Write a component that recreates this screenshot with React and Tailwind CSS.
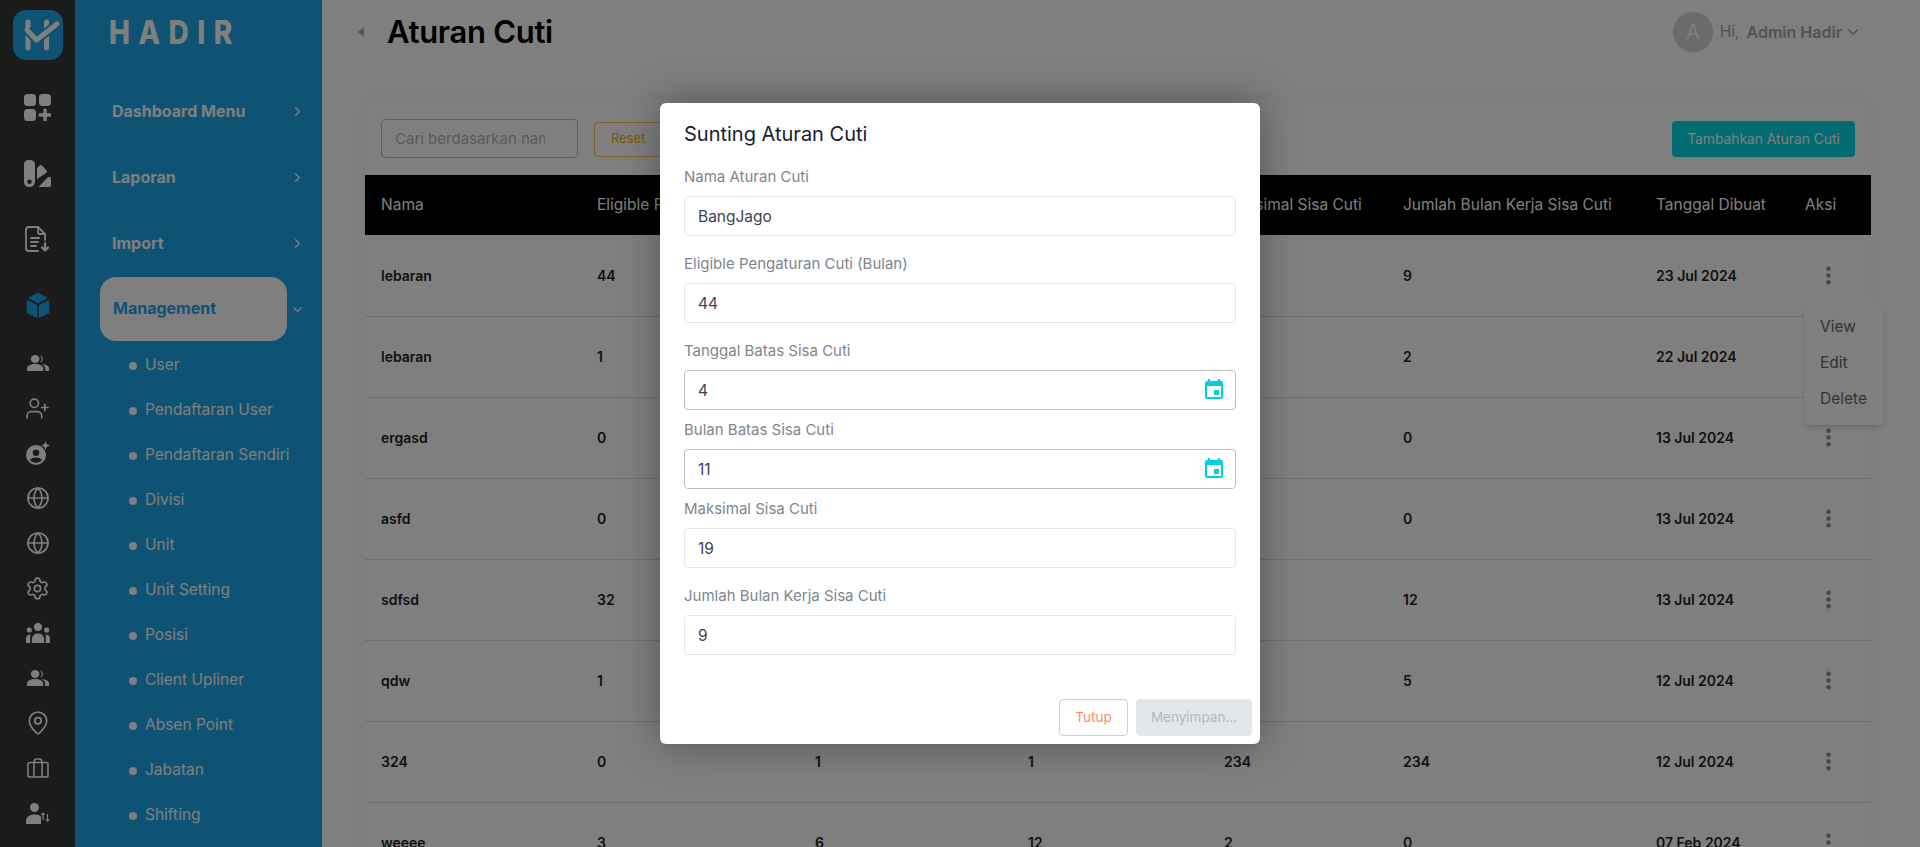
import { ChevronRight, ChevronDown, Globe, Settings, MapPin, UserPlus } from "lucide-react";
import { MdEvent } from "react-icons/md";

const font = { fontFamily: "Inter, sans-serif" };

const LogoMark = () => (
    <svg viewBox="0 0 50 50" className="h-[50px] w-[50px]">
        <rect width="50" height="50" rx="13" fill="#1ca4e8" />
        <path d="M15 12V38M33.500 12V38" stroke="#fff" strokeWidth="5" strokeLinecap="round" />
        <path d="M14 20L23.500 30L44 14" fill="none" stroke="#1ca4e8" strokeWidth="9" />
        <path d="M14 20L23.500 30L44 14" fill="none" stroke="#fff" strokeWidth="5" strokeLinecap="round" strokeLinejoin="round" />
    </svg>
)

const AppsPlus = () => (
    <svg viewBox="0 0 27 27" className="h-[27px] w-[27px]" fill="#fff">
        <rect width="12" height="12" rx="3.500" />
        <rect x="15" width="12" height="12" rx="3.500" />
        <rect y="15" width="12" height="12" rx="3.500" />
        <path d="M21 16V26M16 21H26" stroke="#fff" strokeWidth="3.500" strokeLinecap="round" />
    </svg>
)

const Swatch = () => (
    <svg viewBox="0 0 27 27" className="h-[27px] w-[27px]" fill="#fff">
        <path fillRule="evenodd" d="M5.500 0C8.500 0 11 1.500 11 4V22C11 25 8.500 27 5.500 27S0 25 0 22V4C0 1.500 2.500 0 5.500 0ZM5.500 19.500A2.300 2.300 0 1 0 5.500 24.100A2.300 2.300 0 1 0 5.500 19.500Z" />
        <path d="M13 19V8L15.500 5.500Q16.800 4.500 18 5.500L22.500 10.500Q23.500 11.500 22.500 12.800Z" />
        <path d="M14.500 27L24 17H25.500Q27 17 27 19V25Q27 27 25 27Z" />
    </svg>
)

const DocDown = () => (
    <svg viewBox="0 0 25 26" className="h-[26px] w-[25px]" fill="none" stroke="#fff" strokeWidth="1.800" strokeLinecap="round" strokeLinejoin="round">
        <path d="M13 1H4Q1 1 1 4V22Q1 25 4 25H13" />
        <path d="M13 1L20 8V14" />
        <path d="M13 1V6Q13 8 15 8H20" />
        <path d="M6 12H14M6 16H13M6 20H11" />
        <path d="M20 17V24M17 21.500L20 24.500L23 21.500" strokeWidth="2.200" />
    </svg>
)

const Cube = () => (
    <svg viewBox="0 0 24 27" className="h-[27px] w-[24px]" fill="#1ca4e8" stroke="#1ca4e8" strokeWidth="1.500" strokeLinejoin="round">
        <path d="M12 1.500L20.500 6L12 10.500L3.500 6Z" />
        <path d="M1.500 9L10.500 13.500V25L1.500 20.500Z" />
        <path d="M22.500 9L13.500 13.500V25L22.500 20.500Z" />
    </svg>
)

const People = () => (
    <svg viewBox="0 0 23 18" className="h-[16px] w-[22px]" preserveAspectRatio="none" fill="#fff">
        <circle cx="8.500" cy="4.500" r="4.500" />
        <path d="M0 18V15C0 12 4 10 8.500 10S17 12 17 15V18Z" />
        <path d="M13.500 .3A4.500 4.500 0 0 1 13.500 8.800A6.500 6.500 0 0 0 13.500 .3Z" />
        <path d="M15 10.200C19 10.500 23 12 23 15V18H19V15C19 13 17.500 11.500 15 10.200Z" />
    </svg>
)

const Team = () => (
    <svg viewBox="0 0 24 20" className="h-[20px] w-[24px]" fill="#fff">
        <circle cx="12" cy="4" r="4" />
        <circle cx="3.300" cy="7" r="2.600" />
        <circle cx="20.700" cy="7" r="2.600" />
        <path d="M6 20V16C6 12.500 9 10.500 12 10.500S18 12.500 18 16V20Z" />
        <path d="M0 20V15.500C0 13 2 11.500 4.500 11.500C4 13 4.300 15 4.300 20Z" />
        <path d="M24 20V15.500C24 13 22 11.500 19.500 11.500C20 13 19.700 15 19.700 20Z" />
    </svg>
)

const PersonStar = () => (
    <svg viewBox="0 0 24 24" className="h-[24px] w-[24px]" fill="#fff">
        <path fillRule="evenodd" d="M10 4A10 10 0 1 0 10 24A10 10 0 1 0 10 4ZM10 8.500A3.300 3.300 0 1 1 10 15.100A3.300 3.300 0 1 1 10 8.500ZM10 21.800C7.500 21.800 5.300 20.700 4 19C5 17.300 7.500 16.500 10 16.500S15 17.300 16 19C14.700 20.700 12.500 21.800 10 21.800Z" />
        <path d="M19.500 0L20.800 3.200L24 4.500L20.800 5.800L19.500 9L18.200 5.800L15 4.500L18.200 3.200Z" />
    </svg>
)

const Briefcase = () => (
    <svg viewBox="0 0 24 22" className="h-[20px] w-[22px]" fill="none" stroke="#fff" strokeWidth="1.700" strokeLinejoin="round">
        <rect x="1" y="5" width="22" height="16" rx="2" />
        <path d="M7.500 5V21M16.500 5V21" />
        <path d="M8 5V3Q8 1 10 1H14Q16 1 16 3V5" />
    </svg>
)

const PersonShift = () => (
    <svg viewBox="0 0 24 21" className="h-[21px] w-[24px]" fill="#fff">
        <circle cx="8.500" cy="4.500" r="4.500" />
        <path d="M0 21V18C0 14 4 11.500 8.500 11.500S14 12.500 15 14V21Z" />
        <path d="M17 17V10M15.300 11.800L17 10L18.700 11.800M21.500 11V18M19.800 16.300L21.500 18L23.200 16.300" fill="none" stroke="#fff" strokeWidth="1.200" />
    </svg>
)

const Kebab = () => (
    <svg viewBox="0 0 6 22" className="h-[19px] w-[5px]" fill="#8f8f8f">
        <circle cx="3" cy="3" r="2.700" />
        <circle cx="3" cy="11" r="2.700" />
        <circle cx="3" cy="19" r="2.700" />
    </svg>
)

const RailIcon = ({ children }) => <div className="flex h-[40px] w-full items-center justify-center">{children}</div>

const Rail = () => (
    <div className="flex w-[75px] shrink-0 flex-col items-center bg-[#363636] pt-[10px]">
        <LogoMark />
        <div className="mt-[27px] flex w-full flex-col gap-[26px]">
            <RailIcon><AppsPlus /></RailIcon>
            <RailIcon><Swatch /></RailIcon>
            <RailIcon><DocDown /></RailIcon>
            <RailIcon><Cube /></RailIcon>
        </div>
        <div className="mt-[18px] flex w-full flex-col gap-[5px]">
            <RailIcon><People /></RailIcon>
            <RailIcon><UserPlus size={25} color="#fff" strokeWidth={1.600} /></RailIcon>
            <RailIcon><PersonStar /></RailIcon>
            <RailIcon><Globe size={24} color="#fff" strokeWidth={1.700} /></RailIcon>
            <RailIcon><Globe size={24} color="#fff" strokeWidth={1.700} /></RailIcon>
            <RailIcon><Settings size={25} color="#fff" strokeWidth={1.600} /></RailIcon>
            <RailIcon><Team /></RailIcon>
            <RailIcon><People /></RailIcon>
            <RailIcon><MapPin size={26} color="#fff" strokeWidth={1.600} /></RailIcon>
            <RailIcon><Briefcase /></RailIcon>
            <RailIcon><PersonShift /></RailIcon>
        </div>
    </div>
)

const menus = ["Dashboard Menu", "Laporan", "Import"]
const subMenus = ["User", "Pendaftaran User", "Pendaftaran Sendiri", "Divisi", "Unit", "Unit Setting", "Posisi", "Client Upliner", "Absen Point", "Jabatan", "Shifting"]

const Sidebar = () => (
    <div className="w-[247px] shrink-0 bg-[#1ca4e8]">
        <div className="flex h-[79px] items-start pl-[34px] pt-[13px]">
            <span className="origin-left scale-x-[.85] text-[33px] leading-[38px] font-extrabold tracking-[10px] text-white">HADIR</span>
        </div>
        <div className="flex flex-col gap-[2px]">
            {menus.map(x => (
                <div key={x} className="flex h-[64px] items-center">
                    <div className="ml-[25px] w-[187px] pb-[1px] pl-[12px] text-[16px] font-bold text-white">{x}</div>
                    <ChevronRight size={15} color="#fff" className="ml-[3px]" />
                </div>
            ))}
            <div className="flex h-[64px] items-center">
                <div className="ml-[25px] flex h-[64px] w-[187px] items-center rounded-2xl bg-white pb-[2px] pl-[13px] text-[16px] font-bold text-[#1ca4e8]">Management</div>
                <ChevronDown size={15} color="#fff" className="ml-[3px]" />
            </div>
        </div>
        <div className="mt-[2px]">
            {subMenus.map(x => (
                <div key={x} className="flex h-[45px] items-center pl-[54px] text-[15.500px] text-white">
                    <span className="mr-[8px] h-2 w-2 rounded-full bg-white"></span>
                    <span className="pb-[2px]">{x}</span>
                </div>
            ))}
        </div>
    </div>
)

const Header = () => (
    <div className="flex h-[64px] items-center justify-between pl-[36px] pr-[58px]">
        <div className="flex items-center">
            <span className="h-0 w-0 border-y-[5px] border-r-[6px] border-y-transparent border-r-[#a3a8c0]"></span>
            <h1 className="ml-[23px] pt-[1px] text-[31px] font-semibold tracking-[-.3px] text-black">Aturan Cuti</h1>
        </div>
        <div className="flex items-center">
            <div className="flex h-[40px] w-[40px] items-center justify-center rounded-full bg-[#d6d6d6] text-[20px] text-white">A</div>
            <span className="ml-[7px] text-[15.500px] text-[#a1a5b7]">Hi,</span>
            <span className="ml-[7px] text-[16px] font-semibold text-[#a1a5b7]">Admin Hadir</span>
            <ChevronDown size={18} color="#a1a5b7" className="ml-[2px]" />
        </div>
    </div>
)

const columns = ["Nama", "Eligible Pengaturan Cuti", "Tanggal Batas Sisa Cuti", "Bulan Batas Sisa Cuti", "Maksimal Sisa Cuti", "Jumlah Bulan Kerja Sisa Cuti", "Tanggal Dibuat", "Aksi"]
const rows = [
    ["lebaran", "44", "4", "11", "19", "9", "23 Jul 2024"],
    ["lebaran", "1", "1", "1", "2", "2", "22 Jul 2024"],
    ["ergasd", "0", "1", "1", "0", "0", "13 Jul 2024"],
    ["asfd", "0", "1", "1", "0", "0", "13 Jul 2024"],
    ["sdfsd", "32", "1", "1", "12", "12", "13 Jul 2024"],
    ["qdw", "1", "1", "1", "5", "5", "12 Jul 2024"],
    ["324", "0", "1", "1", "234", "234", "12 Jul 2024"],
    ["weeee", "3", "6", "12", "2", "0", "07 Feb 2024"],
]
const gridCols = "grid grid-cols-[216px_218px_213px_196px_179px_253px_149px_82px]"

const RowMenu = () => (
    <div className="absolute left-[15px] top-[35px] z-10 flex h-[124px] w-[80px] flex-col rounded bg-white py-[8px] pl-[16px] text-[15.500px] font-normal text-[#666] shadow-md">
        <div className="flex h-[36px] items-center">View</div>
        <div className="flex h-[36px] items-center">Edit</div>
        <div className="flex h-[36px] items-center">Delete</div>
    </div>
)

const Card = () => (
    <div className="ml-[43px] mr-[49px] mt-[35px] rounded-t-2xl bg-white shadow-[0_0_12px_rgba(0,0,0,.04)]">
        <div className="flex h-[76px] items-center justify-between px-[16px] pt-[2px]">
            <div className="flex items-center">
                <input readOnly placeholder="Cari berdasarkan nama" className="h-[39px] w-[197px] rounded border border-[#bdbdbd] pl-[13px] pr-[32px] text-[15px] outline-none placeholder:text-[#b5b5b5]" />
                <button className="ml-[16px] mt-[2px] h-[35px] w-[90px] rounded border border-[#f0c44c] pl-[16px] text-left text-[13px] text-[#eeb422]">Reset</button>
            </div>
            <button className="mt-[2px] h-[36px] w-[183px] rounded bg-[#06d6e4] text-[13.800px] text-white">Tambahkan Aturan Cuti</button>
        </div>
        <div className={`${gridCols} h-[60px] items-center bg-black text-[15.500px] text-white`}>
            {columns.map(x => <div key={x} className="truncate pl-[16px]">{x}</div>)}
        </div>
        <div className="pt-[1px]">
            {rows.map((row, i) => (
                <div key={i} className={`${gridCols} h-[81px] items-center border-b border-[#dedede] pb-[1px] text-[14px] font-semibold text-[#222]`}>
                    {row.map((x, j) => <div key={j} className="pl-[16px]">{x}</div>)}
                    <div className="relative flex justify-center pr-[4px]">
                        <Kebab />
                        {i == 0 && <RowMenu />}
                    </div>
                </div>
            ))}
        </div>
    </div>
)

const Field = ({ label, value, date, className }) => (
    <div className={className}>
        <label className="mb-[7px] block h-[24px] text-[15px] leading-[24px] text-[#7f8590]">{label}</label>
        <div className="relative">
            <input readOnly value={value} className={`h-[40px] w-full rounded border bg-white px-[13px] text-[15.500px] text-[#3f4254] outline-none ${date ? "border-[#bcbcbc]" : "border-[#e4e6ef]"}`} />
            {date && <MdEvent size={24} color="#00cfe0" className="absolute right-[10px] top-[8px]" />}
        </div>
    </div>
)

const Modal = () => (
    <div className="absolute inset-0 z-20 flex justify-center bg-black/50 pt-[103px]">
        <div className="h-[641px] w-[600px] rounded-md bg-white shadow-[0_0_40px_rgba(0,0,0,.35)]">
            <h2 className="px-[24px] pt-[18px] text-[20px] leading-[27px] text-[#181c32]">Sunting Aturan Cuti</h2>
            <div className="mt-[17px] px-[24px]">
                <Field label="Nama Aturan Cuti" value="BangJago" className="mb-[16px]" />
                <Field label="Eligible Pengaturan Cuti (Bulan)" value="44" className="mb-[16px]" />
                <Field label="Tanggal Batas Sisa Cuti" value="4" date className="mb-[8px]" />
                <Field label="Bulan Batas Sisa Cuti" value="11" date className="mb-[8px]" />
                <Field label="Maksimal Sisa Cuti" value="19" className="mb-[16px]" />
                <Field label="Jumlah Bulan Kerja Sisa Cuti" value="9" />
            </div>
            <div className="mt-[44px] flex justify-end gap-[8px] pr-[8px]">
                <button className="h-[37px] w-[69px] rounded border border-[#ffc0ab] text-[13.500px] text-[#ff8a65]">Tutup</button>
                <button className="h-[37px] w-[116px] rounded bg-[#e2e8ea] text-[13.500px] text-[#b3b8bb]">Menyimpan...</button>
            </div>
        </div>
    </div>
)

export default function App() {
    return (
        <div className="relative flex h-screen overflow-hidden bg-[#fcfefd]" style={font}>
            <Rail />
            <Sidebar />
            <div className="min-w-0 flex-1">
                <Header />
                <Card />
            </div>
            <Modal />
        </div>
    )
}
